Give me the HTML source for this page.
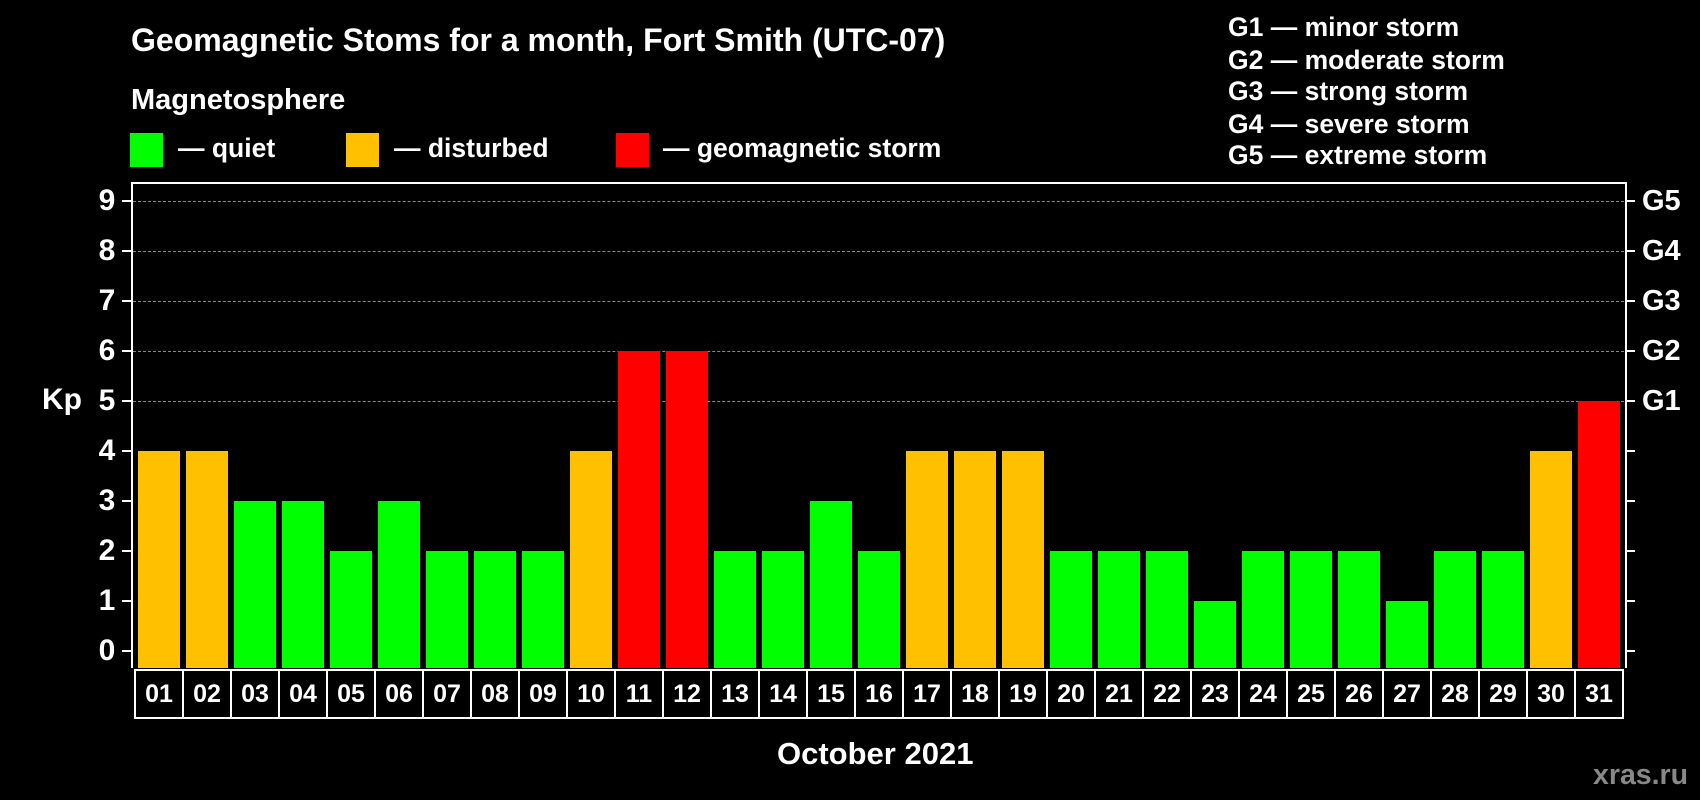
<!DOCTYPE html>
<html><head><meta charset="utf-8"><style>
html,body{margin:0;padding:0;background:#000;width:1700px;height:800px;overflow:hidden}
body{position:relative;font-family:"Liberation Sans",Arial,sans-serif;font-weight:bold;color:#fff}
.t{position:absolute;white-space:nowrap;line-height:1}
.sq{position:absolute;width:33px;height:34px}
.b{position:absolute;width:42px}
.k1{top:601px;height:67px;background:#00ff00}
.k2{top:551px;height:117px;background:#00ff00}
.k3{top:501px;height:167px;background:#00ff00}
.k4{top:451px;height:217px;background:#ffc000}
.k5{top:401px;height:267px;background:#ff0000}
.k6{top:351px;height:317px;background:#ff0000}
.grid{position:absolute;left:133px;width:1491px;height:0;border-top:1px dashed #888}
.tk{position:absolute;height:2px;width:9px;background:#fff}
.tl{left:122px}.tr{left:1626px}
.yl{position:absolute;left:90px;width:34px;text-align:center;font-size:30px;line-height:1}
.gl{position:absolute;left:1642px;font-size:29px;line-height:1}
.c{position:absolute;top:669px;height:46px;width:46px;border:2px solid #fff;border-right:none;text-align:center;font-size:25px;line-height:47px}
.lg{font-size:26.5px}
</style></head><body>
<div class="t" style="left:131px;top:24px;font-size:32px">Geomagnetic Stoms for a month, Fort Smith (UTC-07)</div>
<div class="t" style="left:131px;top:86px;font-size:29px">Magnetosphere</div>
<div class="sq" style="left:130px;top:133px;background:#00ff00"></div>
<div class="t lg" style="left:178px;top:135px">— quiet</div>
<div class="sq" style="left:346px;top:133px;background:#ffc000"></div>
<div class="t lg" style="left:394px;top:135px">— disturbed</div>
<div class="sq" style="left:616px;top:133px;background:#ff0000"></div>
<div class="t lg" style="left:663px;top:135px">— geomagnetic storm</div>
<div class="t lg" style="left:1228px;top:14px">G1 — minor storm</div>
<div class="t lg" style="left:1228px;top:47px">G2 — moderate storm</div>
<div class="t lg" style="left:1228px;top:78px">G3 — strong storm</div>
<div class="t lg" style="left:1228px;top:111px">G4 — severe storm</div>
<div class="t lg" style="left:1228px;top:142px">G5 — extreme storm</div>

<div style="position:absolute;left:131px;top:182px;width:1496px;height:486px;border-top:2px solid #fff;border-left:2px solid #fff;border-right:2px solid #fff;box-sizing:border-box"></div>

<div class="grid" style="top:201px"></div>
<div class="grid" style="top:251px"></div>
<div class="grid" style="top:301px"></div>
<div class="grid" style="top:351px"></div>
<div class="grid" style="top:401px"></div>

<div class="tk tl" style="top:650px"></div><div class="tk tr" style="top:650px"></div>
<div class="tk tl" style="top:600px"></div><div class="tk tr" style="top:600px"></div>
<div class="tk tl" style="top:550px"></div><div class="tk tr" style="top:550px"></div>
<div class="tk tl" style="top:500px"></div><div class="tk tr" style="top:500px"></div>
<div class="tk tl" style="top:450px"></div><div class="tk tr" style="top:450px"></div>
<div class="tk tl" style="top:400px"></div><div class="tk tr" style="top:400px"></div>
<div class="tk tl" style="top:350px"></div><div class="tk tr" style="top:350px"></div>
<div class="tk tl" style="top:300px"></div><div class="tk tr" style="top:300px"></div>
<div class="tk tl" style="top:250px"></div><div class="tk tr" style="top:250px"></div>
<div class="tk tl" style="top:200px"></div><div class="tk tr" style="top:200px"></div>

<div class="yl" style="top:636px">0</div>
<div class="yl" style="top:586px">1</div>
<div class="yl" style="top:536px">2</div>
<div class="yl" style="top:486px">3</div>
<div class="yl" style="top:436px">4</div>
<div class="yl" style="top:386px">5</div>
<div class="yl" style="top:336px">6</div>
<div class="yl" style="top:286px">7</div>
<div class="yl" style="top:236px">8</div>
<div class="yl" style="top:186px">9</div>
<div class="gl" style="top:387px">G1</div>
<div class="gl" style="top:337px">G2</div>
<div class="gl" style="top:287px">G3</div>
<div class="gl" style="top:237px">G4</div>
<div class="gl" style="top:187px">G5</div>

<div class="t" style="left:42px;top:385px;font-size:30px">Kp</div>
<div class="t" style="left:777px;top:738px;font-size:31px">October 2021</div>
<div class="t" style="left:1593px;top:761px;font-size:28.5px;color:#888">xras.ru</div>

<div class="b k4" style="left:138px"></div>
<div class="b k4" style="left:186px"></div>
<div class="b k3" style="left:234px"></div>
<div class="b k3" style="left:282px"></div>
<div class="b k2" style="left:330px"></div>
<div class="b k3" style="left:378px"></div>
<div class="b k2" style="left:426px"></div>
<div class="b k2" style="left:474px"></div>
<div class="b k2" style="left:522px"></div>
<div class="b k4" style="left:570px"></div>
<div class="b k6" style="left:618px"></div>
<div class="b k6" style="left:666px"></div>
<div class="b k2" style="left:714px"></div>
<div class="b k2" style="left:762px"></div>
<div class="b k3" style="left:810px"></div>
<div class="b k2" style="left:858px"></div>
<div class="b k4" style="left:906px"></div>
<div class="b k4" style="left:954px"></div>
<div class="b k4" style="left:1002px"></div>
<div class="b k2" style="left:1050px"></div>
<div class="b k2" style="left:1098px"></div>
<div class="b k2" style="left:1146px"></div>
<div class="b k1" style="left:1194px"></div>
<div class="b k2" style="left:1242px"></div>
<div class="b k2" style="left:1290px"></div>
<div class="b k2" style="left:1338px"></div>
<div class="b k1" style="left:1386px"></div>
<div class="b k2" style="left:1434px"></div>
<div class="b k2" style="left:1482px"></div>
<div class="b k4" style="left:1530px"></div>
<div class="b k5" style="left:1578px"></div>

<div class="c" style="left:134px">01</div>
<div class="c" style="left:182px">02</div>
<div class="c" style="left:230px">03</div>
<div class="c" style="left:278px">04</div>
<div class="c" style="left:326px">05</div>
<div class="c" style="left:374px">06</div>
<div class="c" style="left:422px">07</div>
<div class="c" style="left:470px">08</div>
<div class="c" style="left:518px">09</div>
<div class="c" style="left:566px">10</div>
<div class="c" style="left:614px">11</div>
<div class="c" style="left:662px">12</div>
<div class="c" style="left:710px">13</div>
<div class="c" style="left:758px">14</div>
<div class="c" style="left:806px">15</div>
<div class="c" style="left:854px">16</div>
<div class="c" style="left:902px">17</div>
<div class="c" style="left:950px">18</div>
<div class="c" style="left:998px">19</div>
<div class="c" style="left:1046px">20</div>
<div class="c" style="left:1094px">21</div>
<div class="c" style="left:1142px">22</div>
<div class="c" style="left:1190px">23</div>
<div class="c" style="left:1238px">24</div>
<div class="c" style="left:1286px">25</div>
<div class="c" style="left:1334px">26</div>
<div class="c" style="left:1382px">27</div>
<div class="c" style="left:1430px">28</div>
<div class="c" style="left:1478px">29</div>
<div class="c" style="left:1526px">30</div>
<div class="c" style="left:1574px">31</div>
<div style="position:absolute;left:1622px;top:669px;width:2px;height:50px;background:#fff"></div>
</body></html>
